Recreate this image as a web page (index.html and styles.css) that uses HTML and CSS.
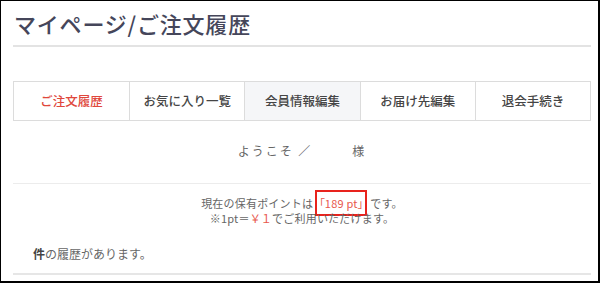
FILE: index.html
```html
<!DOCTYPE html>
<html lang="ja">
<head>
    <meta charset="UTF-8">
    <title>マイページ/ご注文履歴</title>
    <link rel="stylesheet" href="styles.css">
</head>
<body>
    <div class="page">
        <h1 class="page-title">マイページ/ご注文履歴</h1>

        <ul class="tabs">
            <li class="tab active">ご注文履歴</li>
            <li class="tab">お気に入り一覧</li>
            <li class="tab hover">会員情報編集</li>
            <li class="tab">お届け先編集</li>
            <li class="tab">退会手続き</li>
        </ul>

        <p class="welcome">ようこそ ／<span class="name"></span>様</p>

        <div class="points">
            <p>現在の保有ポイントは<span class="pt-box">「189 pt」</span>です。</p>
            <p>※1pt＝<span class="red">￥１</span>でご利用いただけます。</p>
        </div>

        <p class="history"><b>件</b>の履歴があります。</p>
    </div>
</body>
</html>
```

FILE: styles.css
```css
* {
    margin: 0;
    padding: 0;
    box-sizing: border-box;
}

body {
    font-family: "Noto Sans CJK JP", "Noto Sans", sans-serif;
    background: #fff;
    color: #666;
}

.page {
    height: 283px;
    border: 1px solid #000;
    border-right-width: 2px;
    border-bottom-width: 2px;
    padding: 0 7px 0 12px;
    overflow: hidden;
}

.page-title {
    font-size: 22px;
    line-height: 30px;
    font-weight: 500;
    letter-spacing: 0.8px;
    color: #45465a;
    padding: 7px 0 7px 1px;
    border-bottom: 2px solid #e3e3e3;
}

/* Tabs */
.tabs {
    list-style: none;
    display: grid;
    grid-template-columns: repeat(5, 1fr);
    margin-top: 34px;
    border: 1px solid #dcdcdc;
}

.tab {
    height: 38px;
    line-height: 38px;
    text-align: center;
    font-size: 12.5px;
    font-weight: 500;
    color: #454545;
    border-left: 1px solid #dcdcdc;
}

.tab:first-child {
    border-left: none;
}

.tab.active {
    color: #e0473c;
}

.tab.hover {
    background: #f5f6f8;
}

.welcome {
    margin-top: 20px;
    line-height: 20px;
    font-size: 12px;
    letter-spacing: 2px;
    text-align: center;
    color: #666;
}

.welcome .name {
    display: inline-block;
    width: 40px;
}

/* Points */
.points {
    margin-top: 22px;
    border-top: 1px solid #ececec;
    padding-top: 12px;
    text-align: center;
    font-size: 11px;
    letter-spacing: 0.2px;
    line-height: 15px;
    color: #666;
}

.pt-box {
    color: #e8574c;
    border: 2px solid #e8231d;
    padding: 3px 2px;
    margin: 0 3px 0 2px;
    font-feature-settings: "palt";
}

.red {
    color: #e8574c;
}

.history {
    margin-top: 18px;
    padding-left: 20px;
    line-height: 20px;
    font-size: 12px;
    color: #666;
    padding-bottom: 9px;
    border-bottom: 2px solid #e6e6e6;
}

.history b {
    color: #444;
}
```
